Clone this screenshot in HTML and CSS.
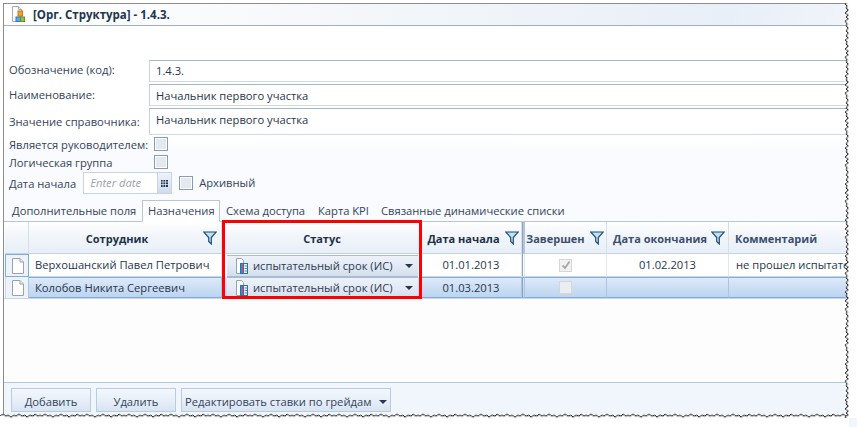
FILE: index.html
```html
<!DOCTYPE html>
<html lang="ru">
<head>
<meta charset="utf-8">
<title>Орг. Структура</title>
<link rel="stylesheet" href="styles.css">
</head>
<body>
<div class="window">
  <header class="titlebar">
    <svg class="title-icon" width="14" height="17" viewBox="0 0 14 17"><path d="M1.500.5H7.500L10.500 3.500V15.500H1.500Z" fill="#fbfcfd" stroke="#a4adb6"/><path d="M7.500.5V3.500H10.500" fill="#e3e9ee" stroke="#a4adb6"/><rect x="7" y="5" width="4.500" height="5" fill="#f5a030" stroke="#cf7418"/><rect x="5" y="11" width="4.500" height="4.500" fill="#62a6e0" stroke="#3476ae"/><rect x="9.500" y="11" width="4" height="4.500" fill="#8fbf49" stroke="#5f952a"/></svg>
    <span class="title-text">[Орг. Структура] - 1.4.3.</span>
  </header>

  <section class="form">
    <div class="form-row row-text"><label class="lbl lbl-up">Обозначение (код):</label><div class="input">1.4.3.</div></div>
    <div class="form-row row-text"><label class="lbl">Наименование:</label><div class="input input-second">Начальник первого участка</div></div>
    <div class="form-row row-tall"><label class="lbl lbl-low">Значение справочника:</label><div class="input input-tall">Начальник первого участка</div></div>
    <div class="form-row row-check"><label class="lbl lbl-auto lbl-down">Является руководителем:</label><span class="check check-a"></span></div>
    <div class="form-row row-check row-check2"><label class="lbl lbl-auto lbl-down">Логическая группа</label><span class="check check-b"></span></div>
    <div class="form-row row-date">
      <label class="lbl lbl-auto lbl-down">Дата начала</label>
      <div class="date"><span class="date-text">Enter date</span><span class="date-btn"><svg width="7" height="7" viewBox="0 0 7 7"><path d="M0 0h7v7H0z" fill="#1f3550"/><path d="M2 0v7M4.500 0v7M0 2h7M0 4.500h7" stroke="#dfe8f2" stroke-width=".8"/></svg></span></div>
      <span class="check check-c"></span><span class="arch">Архивный</span>
    </div>
  </section>

  <nav class="tabs">
    <span class="tab tab-1">Дополнительные поля</span>
    <span class="tab tab-active">Назначения</span>
    <span class="tab">Схема доступа</span>
    <span class="tab">Карта KPI</span>
    <span class="tab">Связанные динамические списки</span>
  </nav>

  <div class="grid">
    <div class="hc"></div>
    <div class="hc"><span class="ht">Сотрудник</span><svg class="funnel" width="14" height="14" viewBox="0 0 14 14"><path d="M.7 1h12.600L8.300 6.500V13L5.700 10.500V6.500Z" fill="#bfe0f5" stroke="#1f4f6e" stroke-width="1.200"/></svg></div>
    <div class="hc"><span class="ht">Статус</span></div>
    <div class="hc hc-date"><span class="ht">Дата начала</span><svg class="funnel" width="14" height="14" viewBox="0 0 14 14"><path d="M.7 1h12.600L8.300 6.500V13L5.700 10.500V6.500Z" fill="#bfe0f5" stroke="#1f4f6e" stroke-width="1.200"/></svg></div>
    <div class="hc sep"></div>
    <div class="hc hc-done"><span class="ht ht-soft">Завершен</span><svg class="funnel" width="14" height="14" viewBox="0 0 14 14"><path d="M.7 1h12.600L8.300 6.500V13L5.700 10.500V6.500Z" fill="#bfe0f5" stroke="#1f4f6e" stroke-width="1.200"/></svg></div>
    <div class="hc hc-end"><span class="ht ht-soft">Дата окончания</span><svg class="funnel" width="14" height="14" viewBox="0 0 14 14"><path d="M.7 1h12.600L8.300 6.500V13L5.700 10.500V6.500Z" fill="#bfe0f5" stroke="#1f4f6e" stroke-width="1.200"/></svg></div>
    <div class="hc hc-last"><span class="ht ht-soft ht-left">Комментарий</span></div>

    <div class="c c-sel c-active"><svg width="12" height="16" viewBox="0 0 12 16"><path d="M.5.5H8L11.500 4V15.500H.5Z" fill="#fff" stroke="#9aa3ab"/><path d="M8 .5V4h3.500" fill="#e4e8ec" stroke="#9aa3ab"/></svg></div>
    <div class="c c-name">Верхошанский Павел Петрович</div>
    <div class="c c-status"><div class="combo"><svg class="doc" width="12" height="16" viewBox="0 0 12 16"><path d="M.5.5H5.500L7.500 2.500V15.500H.5Z" fill="#fbfcfd" stroke="#98a3ad"/><rect x="4.500" y="5.500" width="7" height="10" fill="#f4f9fd" stroke="#2a72ad"/><rect x="5" y="6" width="2" height="9" fill="#3f88c5"/><rect x="7" y="6" width="1" height="9" fill="#e5322c"/><path d="M8.500 8h2.500M8.500 10.500h2.500M8.500 13h2.500" stroke="#3f88c5"/></svg><span class="combo-text">испытательный срок (ИС)</span><i class="arrow"></i></div></div>
    <div class="c c-center">01.01.2013</div>
    <div class="c sep"></div>
    <div class="c c-center"><span class="cell-check"><svg width="10" height="10" viewBox="0 0 10 10"><path d="M1.500 5.500 4 8l4.500-6.500" fill="none" stroke="#a8a8a8" stroke-width="1.800"/></svg></span></div>
    <div class="c c-center">01.02.2013</div>
    <div class="c c-last">не прошел испытательный срок</div>

    <div class="c s c-sel"><svg width="12" height="16" viewBox="0 0 12 16"><path d="M.5.5H8L11.500 4V15.500H.5Z" fill="#fff" stroke="#9aa3ab"/><path d="M8 .5V4h3.500" fill="#e4e8ec" stroke="#9aa3ab"/></svg></div>
    <div class="c s c-name">Колобов Никита Сергеевич</div>
    <div class="c s c-status"><div class="combo"><svg class="doc" width="12" height="16" viewBox="0 0 12 16"><path d="M.5.5H5.500L7.500 2.500V15.500H.5Z" fill="#fbfcfd" stroke="#98a3ad"/><rect x="4.500" y="5.500" width="7" height="10" fill="#f4f9fd" stroke="#2a72ad"/><rect x="5" y="6" width="2" height="9" fill="#3f88c5"/><rect x="7" y="6" width="1" height="9" fill="#e5322c"/><path d="M8.500 8h2.500M8.500 10.500h2.500M8.500 13h2.500" stroke="#3f88c5"/></svg><span class="combo-text">испытательный срок (ИС)</span><i class="arrow"></i></div></div>
    <div class="c s c-center">01.03.2013</div>
    <div class="c s sep"></div>
    <div class="c s c-center"><span class="cell-check"></span></div>
    <div class="c s"></div>
    <div class="c s c-last"></div>
  </div>

  <div class="grid-empty"></div>

  <footer class="footer">
    <button class="btn btn-fixed">Добавить</button>
    <button class="btn btn-fixed">Удалить</button>
    <button class="btn btn-drop">Редактировать ставки по грейдам<i class="arrow"></i></button>
  </footer>
</div>

<div class="highlight"></div>

<svg class="torn" width="857" height="427" viewBox="0 0 857 427">
  <defs>
    <pattern id="tear-r" patternUnits="userSpaceOnUse" x="844" y="0" width="13" height="36">
      <path d="M2 0 4 2 1 4 3 6 2 8 4 10 1 13 4 15 2 17 4 19 1 21 3 24 2 26 4 28 2 31 4 33 2 36H13V0Z" fill="#fff"/>
      <path d="M2 0 4 2 1 4 3 6 2 8 4 10 1 13 4 15 2 17 4 19 1 21 3 24 2 26 4 28 2 31 4 33 2 36" fill="none" stroke="#333"/>
      <path d="M3 0 5 2 2 4 4 6 3 8 5 10 2 13 5 15 3 17 5 19 2 21 4 24 3 26 5 28 3 31 5 33 3 36" fill="none" stroke="#bbb"/>
    </pattern>
    <pattern id="tear-b" patternUnits="userSpaceOnUse" x="0" y="413" width="42" height="14">
      <path d="M0 3 3 1 6 3 8 2 11 4 14 2 16 3 19 1 22 3 25 2 27 4 30 2 33 3 35 1 38 3 40 2 42 3V14H0Z" fill="#fff"/>
      <path d="M0 3 3 1 6 3 8 2 11 4 14 2 16 3 19 1 22 3 25 2 27 4 30 2 33 3 35 1 38 3 40 2 42 3" fill="none" stroke="#333"/>
      <path d="M0 4 3 2 6 4 8 3 11 5 14 3 16 4 19 2 22 4 25 3 27 5 30 3 33 4 35 2 38 4 40 3 42 4" fill="none" stroke="#bbb"/>
    </pattern>
  </defs>
  <rect x="0" y="413" width="849" height="14" fill="url(#tear-b)"/>
  <rect x="844" y="0" width="13" height="418" fill="url(#tear-r)"/>
  <rect x="846" y="0" width="11" height="3" fill="#fff"/>
  <rect x="0" y="416" width="3" height="11" fill="#fff"/>
</svg>
</body>
</html>
```
FILE: styles.css
```css
* { box-sizing: border-box; }
html, body { margin: 0; padding: 0; }
body {
  width: 857px; height: 427px; overflow: hidden; background: #fff; position: relative;
  font: 11.2px/14px "Open Sans", "Noto Sans", sans-serif; color: #26364d;
  padding: 3px 0 0 3px;
}
.window {
  height: 424px; display: flex; flex-direction: column;
  border-top: 1px solid #8d8d8d; border-left: 1px solid #8d8d8d;
  background: #f9fbfe;
}
.titlebar {
  height: 22px; flex: none; display: flex; align-items: center; padding-left: 7px; gap: 8px;
  background: linear-gradient(100deg, #fff 0%, #f2f5f9 50%, #e9eff8 85%, #f1f5fa 100%);
  border-bottom: 1px solid #9fb0c4;
}
.title-icon { flex: none; }
.title-text { font-weight: 700; font-size: 11.500px; color: #22344f; }
.form {
  height: 173px; flex: none; padding: 34px 0 0 5px; display: flex; flex-direction: column;
  background: linear-gradient(#fff 0, #fff 110px, #f9fbfe 125px);
}
.form-row { display: flex; flex: none; }
.row-text { height: 22px; margin-bottom: 2px; align-items: center; }
.row-tall { height: 27px; margin-bottom: 2px; }
.row-check { height: 14px; align-items: center; }
.row-check2 { margin-top: 4px; }
.row-date { height: 22px; margin-top: 3px; align-items: center; }
.lbl { width: 140px; flex: none; white-space: nowrap; color: #33445c; }
.lbl-up { padding-bottom: 2px; }
.lbl-down { padding-top: 2px; }
.lbl-low { padding-top: 7px; }
.lbl-auto { width: auto; }
.input {
  flex: 1; height: 22px; background: #fff; padding: 3px 6px 0;
  border-top: 1px solid #a2b7cd; border-bottom: 1px solid #d0dbe7; border-left: 1px solid #c5d2e0;
  color: #26364d;
}
.input-second { padding-top: 4px; }
.input-tall { height: 27px; padding-top: 4px; }
.check {
  width: 14px; height: 14px; flex: none; border: 1px solid #8a9bb0; background: #e2e9f3;
  box-shadow: inset 0 0 0 1px #fff;
}
.check-a { margin-left: 6px; }
.check-b { margin-left: 42px; }
.check-c { margin-left: 7px; }
.date {
  display: flex; width: 89px; height: 22px; margin-left: 7px; background: #fff;
  border: 1px solid #c6d4e3;
}
.date-text { flex: 1; padding: 3px 0 0 6px; font-style: italic; color: #9aa2ad; }
.date-btn {
  width: 14px; display: flex; align-items: center; justify-content: center;
  background: linear-gradient(#eef3fa, #cddcee); border-left: 1px solid #c6d4e3;
}
.arch { margin-left: 6px; color: #33445c; }
.tabs {
  height: 23px; flex: none; display: flex; padding-left: 8px; align-items: flex-end;
  border-bottom: 1px solid #b5c7da; color: #33445c;
}
.tab { height: 22px; padding: 4px 6px 0; margin-bottom: -1px; white-space: nowrap; }
.tab-1 { padding-left: 0; padding-right: 5px; width: 130px; }
.tab-active { width: 78px; background: #fff; border: 1px solid #b5c7da; border-bottom: 1px solid #fff; padding: 3px 5px 0; }
.tab:nth-child(3) { width: 92px; padding-left: 6px; }
.tab:nth-child(4) { width: 63px; padding-left: 6px; }
.grid {
  flex: none; display: grid; margin-left: 1px;
  grid-template-columns: 24px 193px 199px 101px 3px 82px 122px minmax(0, 1fr);
  grid-template-rows: 32px 23px 21px;
}
.hc {
  display: flex; align-items: center; padding: 0 4px 0 6px; min-width: 0;
  background: linear-gradient(#fff, #f3f6fb 40%, #e8eff8);
  border-right: 1px solid #d5dfea; border-bottom: 1px solid #c4d2e1;
}
.hc-date { padding-right: 2px; }
.hc-date .funnel { margin-left: 5px; }
.hc-done { padding: 0 2px 0 1px; }
.hc-done .ht { text-align: left; }
.hc-done .funnel { margin-right: 0; }
.ht { flex: 1; padding-top: 2px; text-align: center; font-size: 11px; font-weight: 700; color: #1e3049; white-space: nowrap; }
.ht-soft { color: #3b4f6d; }
.ht-left { text-align: left; }
.hc-last { border-right: 0; }
.funnel { flex: none; margin-left: 4px; }
.sep { background: #b4c4d6; padding: 0; border: 0; box-shadow: inset 1px 0 #8fa3ba; }
.c {
  display: flex; align-items: center; min-width: 0; white-space: nowrap; overflow: hidden;
  background: #fff; border-right: 1px solid #dfe7f0; border-bottom: 1px solid #c8d6e5;
}
.s { background: linear-gradient(#dde9f8, #bdd4f0); border-top: 1px solid #86add6; border-bottom: 1px solid #86add6; border-right-color: #a9c5e4; }
.c-sel { justify-content: center; padding-left: 1px; background: #eef3f9; border-bottom: 0; border-top: 0; border-left: 1px solid #d0dbe6; }
.c-active { border: 1px solid #79aee2; }
.c-name { padding-left: 6px; }
.c-status { padding: 0 2px 0 5px; overflow: visible; border-bottom: 0; border-top: 0; }
.c-center { justify-content: center; }
.c-last { padding-left: 7px; border-right: 0; }
.combo {
  display: flex; align-items: center; width: 100%; height: 22px; padding: 0 5px 0 9px;
  background: linear-gradient(#edf2f8, #e3eaf4 50%, #d3dfed);
  border-top: 1px solid #a9bbd0; border-bottom: 1px solid #a9bbd0;
}
.doc { flex: none; margin-right: 5px; }
.combo-text { flex: 1; color: #2b3b52; }
.arrow {
  flex: none; width: 0; height: 0; display: block;
  border-left: 4px solid transparent; border-right: 4px solid transparent; border-top: 4px solid #27374f;
}
.cell-check {
  width: 13px; height: 13px; display: flex; align-items: center; justify-content: center;
  border: 1px solid #d6d6d6; background: #f1f1f1;
}
.s .cell-check { background: #eaeef3; }
.grid-empty { flex: 1; background: #fdfdfe; border-top: 1px solid #c8d6e5; }
.footer {
  height: 45px; flex: none; display: flex; gap: 5px; padding: 5px 0 0 7px; align-items: flex-start;
  background: #f1f6fd; border-top: 1px solid #b5c7da;
}
.btn {
  height: 24px; padding: 3px 0 0; font: inherit; color: #33445c; display: flex; align-items: center; justify-content: center;
  background: linear-gradient(#f4f8fd, #e8eff8 50%, #d8e4f2); border: 1px solid #bacbdd;
}
.btn-fixed { width: 80px; }
.btn-drop { width: 210px; justify-content: flex-start; padding: 3px 3px 0 3px; }
.btn-drop .arrow { margin-left: auto; }
.highlight {
  position: absolute; left: 222px; top: 220px; width: 200px; height: 79px;
  border: 3px solid #f00; pointer-events: none;
}
.torn { position: absolute; left: 0; top: 0; pointer-events: none; }
```
